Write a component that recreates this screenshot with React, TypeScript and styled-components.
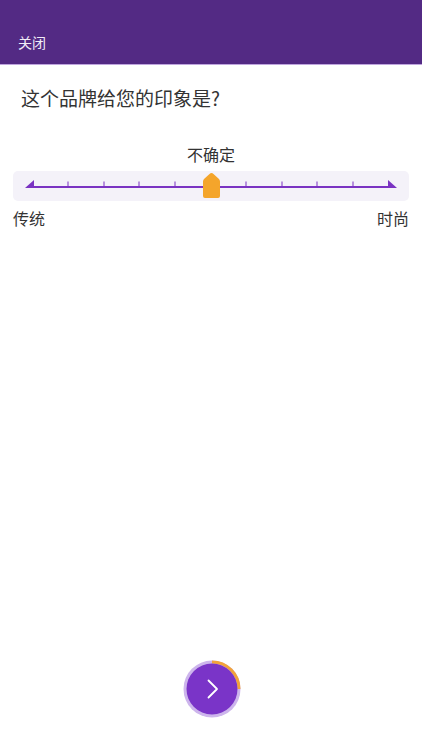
import React from 'react';
import styled, { createGlobalStyle } from 'styled-components';

const GlobalStyle = createGlobalStyle`
  html, body {
    margin: 0;
    padding: 0;
    background: #ffffff;
  }
  body {
    font-family: 'Noto Sans CJK SC', 'Noto Sans', sans-serif;
  }
`;

const TICKS = [55, 91, 126, 162, 233, 269, 304, 340];

function ScaleSlider() {
  return (
    <S.Track>
      <svg width='396' height='30' viewBox='0 0 396 30'>
        <line x1='14' y1='16' x2='382' y2='16' stroke='#7a33c2' strokeWidth='2' />
        <polygon points='12,17 21,9 21,17' fill='#7a33c2' />
        <polygon points='375,9 384,17 375,17' fill='#7a33c2' />
        {TICKS.map((x) => (
          <line key={x} x1={x} y1='10.5' x2={x} y2='16' stroke='#7a33c2' strokeWidth='1' />
        ))}
        <path
          d='M198.5 2 Q199.5 2 200.5 3 L206 8 Q207 9 207 10.5 V25 Q207 27 205 27 H192 Q190 27 190 25 V10.5 Q190 9 191 8 L196.5 3 Q197.5 2 198.5 2 Z'
          fill='#f4a52b'
        />
      </svg>
    </S.Track>
  );
}

function NextButton() {
  return (
    <S.Next type='button'>
      <svg width='60' height='60' viewBox='0 0 60 60'>
        <circle cx='30' cy='30' r='28.5' fill='#cdb5ec' />
        <path d='M30 3 A27 27 0 0 1 57 30' fill='none' stroke='#f2a33a' strokeWidth='3' />
        <circle cx='30' cy='30' r='25.5' fill='#7a34c8' />
        <polyline
          points='26.5,21.5 35,30 26.5,38.5'
          fill='none'
          stroke='#ffffff'
          strokeWidth='1.8'
          strokeLinecap='round'
          strokeLinejoin='round'
        />
      </svg>
    </S.Next>
  );
}

function App() {
  return (
    <>
      <GlobalStyle />
      <S.Page>
        <S.Header>
          <S.Close>关闭</S.Close>
        </S.Header>
        <S.Question>这个品牌给您的印象是?</S.Question>
        <S.Value>不确定</S.Value>
        <ScaleSlider />
        <S.Ends>
          <span>传统</span>
          <span>时尚</span>
        </S.Ends>
        <S.Footer>
          <NextButton />
        </S.Footer>
      </S.Page>
    </>
  );
}

const S: {
  Page: any;
  Header: any;
  Close: any;
  Question: any;
  Value: any;
  Track: any;
  Ends: any;
  Footer: any;
  Next: any;
} = {
  Page: styled.div`
    display: flex;
    flex-direction: column;
    min-height: 100vh;
    color: #333333;
  `,
  Header: styled.header`
    display: flex;
    align-items: flex-end;
    height: 65px;
    padding: 0 18px 12px;
    box-sizing: border-box;
    background-color: #532a84;
    border-bottom: 1px solid #bfa5de;
  `,
  Close: styled.span`
    font-size: 14px;
    line-height: 20px;
    color: #f1ecf7;
  `,
  Question: styled.h1`
    margin: 20px 0 0;
    padding-left: 21px;
    font-size: 19px;
    font-weight: 400;
    line-height: 26px;
    color: #333333;
  `,
  Value: styled.div`
    margin-top: 32px;
    text-align: center;
    font-size: 16px;
    line-height: 22px;
    color: #333333;
  `,
  Track: styled.div`
    display: flex;
    margin: 6px 13px 0;
    height: 30px;
    border-radius: 5px;
    background-color: #f4f2f9;

    svg {
      display: block;
    }
  `,
  Ends: styled.div`
    display: flex;
    justify-content: space-between;
    margin-top: 6px;
    padding: 0 13px;
    font-size: 16px;
    line-height: 22px;
    color: #333333;
  `,
  Footer: styled.div`
    display: flex;
    justify-content: center;
    margin-top: auto;
    padding: 0 0 31px 2px;
  `,
  Next: styled.button`
    display: block;
    padding: 0;
    border: none;
    background: none;
    cursor: pointer;

    svg {
      display: block;
    }
  `
};

export default App;
